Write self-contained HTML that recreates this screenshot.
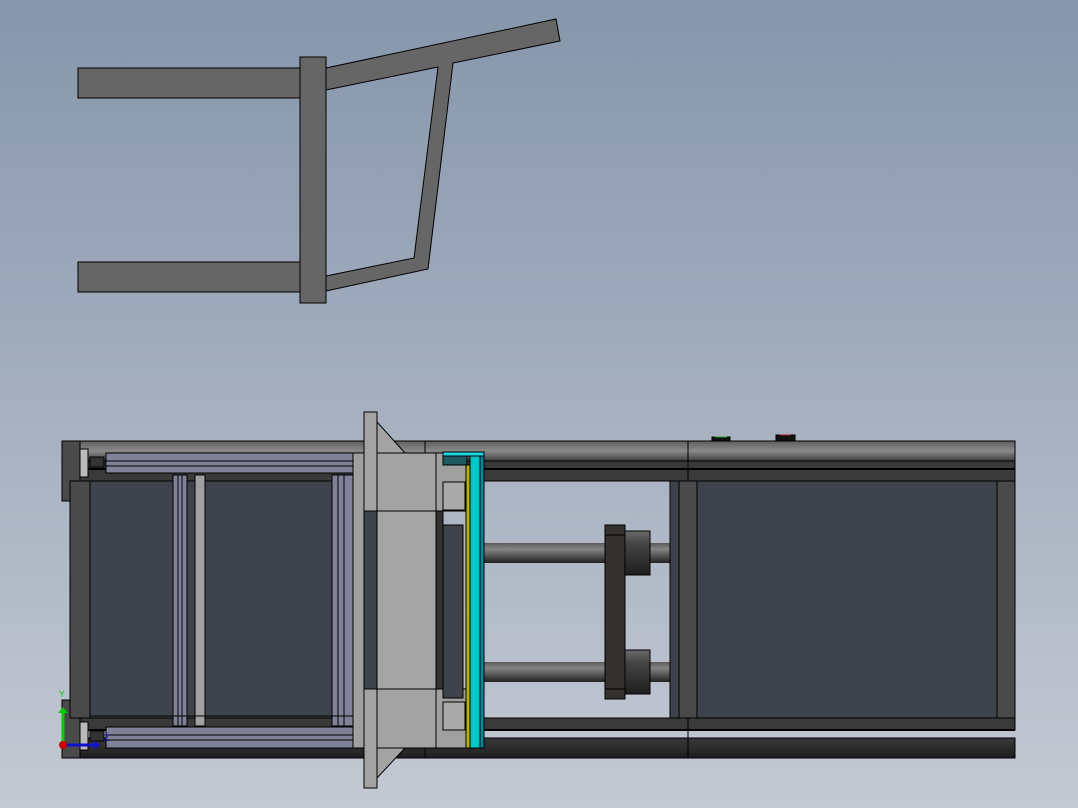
<!DOCTYPE html>
<html><head><meta charset="utf-8"><style>
html,body{margin:0;padding:0;width:1078px;height:808px;overflow:hidden}
body{background:linear-gradient(#8696ab,#c4c9d3)}
svg{display:block}
</style></head><body>
<svg width="1078" height="808" viewBox="0 0 1078 808" xmlns="http://www.w3.org/2000/svg">
<defs>
<linearGradient id="rail" x1="0" y1="0" x2="0" y2="1"><stop offset="0" stop-color="#5e5e5e"/><stop offset="0.5" stop-color="#8a8a8a"/><stop offset="1" stop-color="#3e3e3e"/></linearGradient>
<linearGradient id="railb" x1="0" y1="0" x2="0" y2="1"><stop offset="0" stop-color="#3a3a3a"/><stop offset="1" stop-color="#1e1e1e"/></linearGradient>
<linearGradient id="rod" x1="0" y1="0" x2="0" y2="1"><stop offset="0" stop-color="#5a5a5a"/><stop offset="0.3" stop-color="#858585"/><stop offset="1" stop-color="#222"/></linearGradient>
<linearGradient id="nut" x1="0" y1="0" x2="0" y2="1"><stop offset="0" stop-color="#6a6a6a"/><stop offset="0.3" stop-color="#444"/><stop offset="1" stop-color="#1e1e1e"/></linearGradient>
</defs>
<g stroke="#000" stroke-width="1" fill="#666">
<rect x="78" y="68" width="222" height="30"/>
<rect x="78" y="262" width="222" height="30"/>
<path fill-rule="evenodd" d="M326 68 L556 19 L560 41 L453 63 L428 269 L326 291 Z M326 90 L438 67 L414 258 L326 276 Z"/>
<rect x="300" y="57" width="26" height="246"/>
</g>
<g stroke="#000" stroke-width="1">
<!-- outer frame rails -->
<rect x="62" y="441" width="953" height="20" fill="url(#rail)"/>
<rect x="62" y="461" width="953" height="20" fill="#3a3a3a"/>
<line x1="62" y1="469" x2="1015" y2="469" stroke-width="2"/>
<rect x="62" y="718" width="953" height="12" fill="#3a3a3a"/>
<line x1="62" y1="730" x2="1015" y2="730" stroke-width="2"/>
<rect x="62" y="738" width="953" height="20" fill="url(#railb)"/>
<line x1="688" y1="441" x2="688" y2="481"/><line x1="688" y1="718" x2="688" y2="758"/>
<line x1="425" y1="441" x2="425" y2="481"/><line x1="425" y1="718" x2="425" y2="758"/>
<!-- left end cap -->
<rect x="62" y="441" width="18" height="60" fill="#4a4a4a"/>
<rect x="62" y="700" width="18" height="58" fill="#4a4a4a"/>
<!-- left panels -->
<rect x="70" y="481" width="20" height="237" fill="#4a4a4a"/>
<rect x="90" y="481" width="263" height="237" fill="#3f434c"/>
<!-- profiles -->
<rect x="106" y="453" width="247" height="20" fill="#7f8298"/>
<line x1="106" y1="461" x2="353" y2="461"/><line x1="106" y1="466" x2="353" y2="466"/>
<rect x="106" y="727" width="247" height="21" fill="#7f8298"/>
<line x1="106" y1="735" x2="353" y2="735"/><line x1="106" y1="740" x2="353" y2="740"/>
<rect x="173" y="475" width="14" height="251" fill="#7f8298"/>
<line x1="178" y1="475" x2="178" y2="726"/><line x1="182" y1="475" x2="182" y2="726"/>
<rect x="195" y="475" width="10" height="251" fill="#a0a0a0"/>
<rect x="332" y="475" width="21" height="251" fill="#7f8298"/>
<line x1="338" y1="475" x2="338" y2="726"/><line x1="344" y1="475" x2="344" y2="726"/>
<line x1="90" y1="716" x2="353" y2="716"/>
<!-- wheels -->
<rect x="80" y="449" width="8" height="28" fill="#bbb"/>
<rect x="80" y="722" width="8" height="28" fill="#bbb"/>
<rect x="90" y="457" width="14" height="10" fill="#333"/>
<rect x="90" y="731" width="14" height="10" fill="#333"/>
<!-- plate -->
<rect x="353" y="453" width="11" height="295" fill="#a0a0a0"/>
<polygon points="377,422 405,453 377,453" fill="#a3a3a3"/>
<polygon points="377,778 405,748 377,748" fill="#a3a3a3"/>
<rect x="364" y="412" width="13" height="376" fill="#a3a3a3"/>
<rect x="364" y="511" width="13" height="178" fill="#3f434c"/>
<rect x="377" y="453" width="59" height="58" fill="#a3a3a3"/>
<rect x="377" y="511" width="59" height="178" fill="#a5a5a5"/>
<rect x="377" y="689" width="59" height="59" fill="#a3a3a3"/>
<rect x="436" y="511" width="7" height="178" fill="#333"/>
<rect x="436" y="453" width="30" height="58" fill="#a0a0a0"/>
<rect x="436" y="689" width="30" height="59" fill="#a0a0a0"/>
<rect x="443" y="482" width="22" height="28" fill="#aaa"/>
<rect x="443" y="702" width="22" height="28" fill="#aaa"/>
<rect x="443" y="525" width="20" height="173" fill="#3f434c"/>
<rect x="443" y="453" width="24" height="12" fill="#1e5a60"/>
<!-- rods -->
<rect x="484" y="543" width="186" height="20" fill="url(#rod)" stroke="none"/>
<rect x="484" y="662" width="186" height="20" fill="url(#rod)" stroke="none"/>
<rect x="625" y="531" width="25" height="44" fill="url(#nut)"/>
<rect x="625" y="650" width="25" height="44" fill="url(#nut)"/>
<rect x="605" y="525" width="20" height="174" fill="#33322f"/>
<line x1="605" y1="535" x2="625" y2="535"/><line x1="605" y1="689" x2="625" y2="689"/>
<!-- colored plates -->
<rect x="466" y="465" width="4" height="283" fill="#b4b400"/>
<rect x="470" y="455" width="10" height="293" fill="#00c8c8"/>
<rect x="480" y="453" width="4" height="295" fill="#00899a"/>
<rect x="443" y="452" width="41" height="4" fill="#20d8e8"/>
<!-- right frame -->
<rect x="670" y="481" width="9" height="237" fill="#3f434c"/>
<rect x="679" y="481" width="18" height="237" fill="#4a4a4a"/>
<rect x="697" y="481" width="300" height="237" fill="#3f434c"/>
<rect x="997" y="481" width="18" height="237" fill="#4a4a4a"/>
<!-- buttons -->
<rect x="712" y="437" width="18" height="4" fill="#111"/>
<rect x="776" y="435" width="19" height="6" fill="#111"/>
</g>
<line x1="715" y1="437" x2="727" y2="437" stroke="#2a9a2a" stroke-width="1"/>
<line x1="780" y1="435" x2="791" y2="435" stroke="#a02020" stroke-width="1"/>
<!-- triad -->
<line x1="63" y1="745" x2="63" y2="712" stroke="#0c0" stroke-width="3"/>
<polygon points="58,713 68,713 63,707" fill="#0c0"/>
<line x1="63" y1="745" x2="95" y2="745" stroke="#11c" stroke-width="3"/>
<polygon points="94,740 94,750 100,745" fill="#11c"/>
<circle cx="63" cy="745" r="4" fill="#c00"/>
<text x="59" y="697" font-family="Liberation Sans,sans-serif" font-size="9" fill="#0c0">Y</text>
<text x="104" y="741" font-family="Liberation Sans,sans-serif" font-size="9" fill="#11c">Z</text>
</svg>
</body></html>
